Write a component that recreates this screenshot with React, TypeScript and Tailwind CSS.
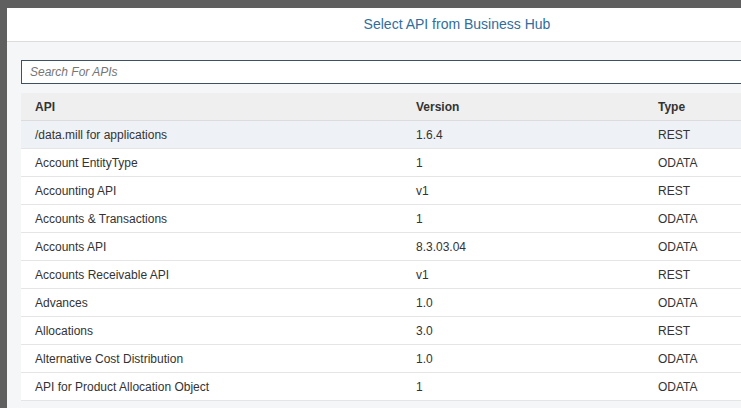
const rows = [
    { name: "/data.mill for applications", version: "1.6.4", type: "REST" },
    { name: "Account EntityType", version: "1", type: "ODATA" },
    { name: "Accounting API", version: "v1", type: "REST" },
    { name: "Accounts & Transactions", version: "1", type: "ODATA" },
    { name: "Accounts API", version: "8.3.03.04", type: "ODATA" },
    { name: "Accounts Receivable API", version: "v1", type: "REST" },
    { name: "Advances", version: "1.0", type: "ODATA" },
    { name: "Allocations", version: "3.0", type: "REST" },
    { name: "Alternative Cost Distribution", version: "1.0", type: "ODATA" },
    { name: "API for Product Allocation Object", version: "1", type: "ODATA" },
];

export default function App() {
    return (
        <div
            className="h-[408px] w-[741px] overflow-hidden bg-[#5f5f5f] pl-[7px] pt-[8px]"
            style={{ fontFamily: '"Liberation Sans", Arial, sans-serif' }}
        >
            <div className="w-[900px] h-[420px] bg-[#f5f6f7]">
                {/* Header */}
                <div className="h-[34px] bg-white border-b border-[#dcdcdc] flex items-center justify-center">
                    <h1 className="text-[14px] text-[#2f6e9e] pb-[1px]">Select API from Business Hub</h1>
                </div>

                <div className="px-[14px] pt-[17px]">
                    <input
                        className="w-full h-[24px] bg-white border border-[#3f5161] px-[8px] text-[12px] italic text-[#333] placeholder:text-[#757575] outline-none"
                        placeholder="Search For APIs"
                    />

                    <div className="mt-[9px] text-[12px] text-[#333]">
                        <div className="flex h-[28px] items-center bg-[#efefef] border-b border-[#dcdcdc] font-bold">
                            <div className="w-[381px] pl-[14px]">API</div>
                            <div className="w-[242px] pl-[14px]">Version</div>
                            <div className="flex-1 pl-[14px]">Type</div>
                        </div>
                        {rows.map((r, i) => (
                            <div
                                key={r.name}
                                className={`flex h-[28px] items-center border-b border-[#e5e5e5] ${i === 0 ? "bg-[#eef1f5]" : "bg-white"}`}
                            >
                                <div className="w-[381px] pl-[14px]">{r.name}</div>
                                <div className="w-[242px] pl-[14px]">{r.version}</div>
                                <div className="flex-1 pl-[14px]">{r.type}</div>
                            </div>
                        ))}
                    </div>
                </div>
            </div>
        </div>
    );
}
